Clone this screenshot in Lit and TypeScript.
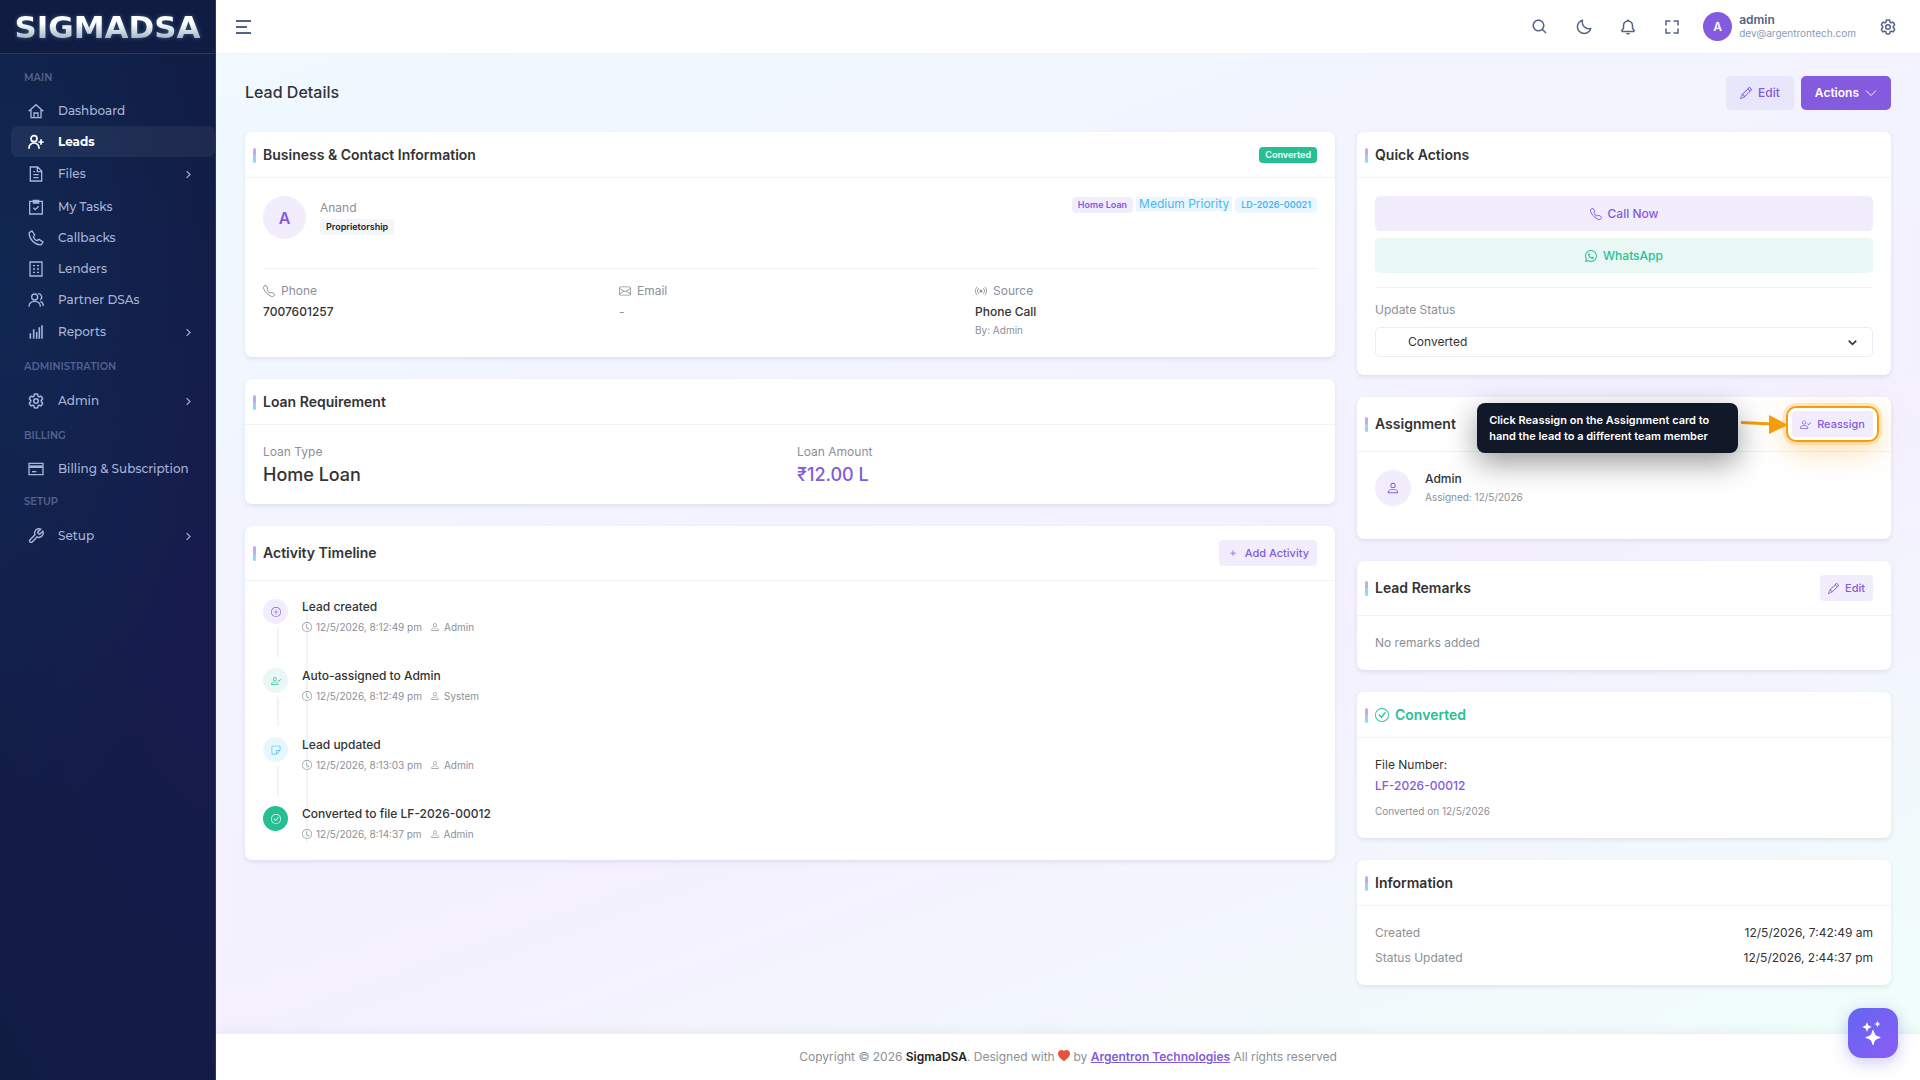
import { LitElement, html, css, svg, nothing, type TemplateResult, type SVGTemplateResult } from "lit";
import { customElement, property } from "lit/decorators.js";
import { classMap } from "lit/directives/class-map.js";

const GEAR =
  "M9.594 3.94c.09-.542.56-.94 1.11-.94h2.593c.55 0 1.02.398 1.11.94l.213 1.281c.063.374.313.686.645.87.074.04.147.083.22.127.325.196.72.257 1.075.124l1.217-.456a1.125 1.125 0 0 1 1.37.49l1.296 2.247a1.125 1.125 0 0 1-.26 1.431l-1.003.827c-.293.241-.438.613-.43.992a7.723 7.723 0 0 1 0 .255c-.008.378.137.75.43.991l1.004.827c.424.35.534.955.26 1.43l-1.298 2.247a1.125 1.125 0 0 1-1.369.491l-1.217-.456c-.355-.133-.75-.072-1.076.124a6.47 6.47 0 0 1-.22.128c-.331.183-.581.495-.644.869l-.213 1.281c-.09.543-.56.94-1.11.94h-2.594c-.55 0-1.019-.398-1.11-.94l-.213-1.281c-.062-.374-.312-.686-.644-.87a6.52 6.52 0 0 1-.22-.127c-.325-.196-.72-.257-1.076-.124l-1.217.456a1.125 1.125 0 0 1-1.369-.49l-1.297-2.247a1.125 1.125 0 0 1 .26-1.431l1.004-.827c.292-.24.437-.613.43-.991a6.932 6.932 0 0 1 0-.255c.007-.38-.138-.751-.43-.992l-1.004-.827a1.125 1.125 0 0 1-.26-1.43l1.297-2.247a1.125 1.125 0 0 1 1.37-.491l1.216.456c.356.133.751.072 1.076-.124.072-.044.146-.086.22-.128.332-.183.582-.495.644-.869z";
const RING = "M8 15A7 7 0 1 1 8 1a7 7 0 0 1 0 14m0 1A8 8 0 1 0 8 0a8 8 0 0 0 0 16";
const PLUS = "M8 4a.5.5 0 0 1 .5.5v3h3a.5.5 0 0 1 0 1h-3v3a.5.5 0 0 1-1 0v-3h-3a.5.5 0 0 1 0-1h3v-3A.5.5 0 0 1 8 4";

/* Outline icons on a 24 grid, drawn with strokes. */
const LINE: Record<string, SVGTemplateResult> = {
  home: svg`<path d="M1 12.5 12 2.5l11 10M4.5 10v12h15V10M9 22v-7h6v7"/>`,
  userPlus: svg`<g stroke-width="2.6"><circle cx="9" cy="7" r="4.5"/><path d="M1.500 22v-1a7.500 7.500 0 0 1 15 0v1M19.500 8v8M15.500 12h8"/></g>`,
  file: svg`<path d="M3.500 1.500h11l6 6v15h-17zM14 2v6.500h6M8 13h8M8 17.500h8M8 8.500h2.500"/>`,
  task: svg`<path d="M2.500 3.500h19v19h-19z"/><path d="M8 2h8v4H8z" fill="currentColor"/><path d="m8 13 3 3 5-5"/>`,
  phone: svg`<path d="M2 4 6 1.500l4 6L8 10.500c1 2.500 3 4.500 5.500 5.500l3-2 6 4-2.500 4C11 23.500.5 13 2 4z"/>`,
  building: svg`<path d="M3 1.500h18v21H3z"/><path d="M7.500 7h3M13.500 7h3M7.500 12h3M13.500 12h3M7.500 17h3M13.500 17h3"/>`,
  users: svg`<circle cx="10" cy="7.500" r="4.500"/><path d="M1.500 22c0-5 3.500-8 8.500-8s8.500 3 8.500 8M15 2.500a5 5 0 0 1 3.500 9M18.500 14c3 1 4.500 4 4.500 7"/>`,
  chart: svg`<g stroke-width="2.4"><path d="M3.500 14v8M8.500 8v14M13 12v10M17 5v17M21 2v20"/></g>`,
  gear: svg`<g transform="translate(-1.800 -1.800) scale(1.150)"><path d=${GEAR}/><circle cx="12" cy="12" r="3"/></g>`,
  card: svg`<path d="M1.500 3.500h21v17h-21z"/><path d="M2 8.500h20" stroke-width="4"/><path d="M6 16h6.500"/>`,
  wrench: svg`<g transform="translate(-1 -1) scale(1.080)"><path d="M14.700 6.300a1 1 0 0 0 0 1.400l1.600 1.600a1 1 0 0 0 1.400 0l3.800-3.800a6 6 0 0 1-7.900 7.900l-6.900 6.900a2.100 2.100 0 0 1-3-3l6.900-6.900a6 6 0 0 1 7.900-7.900z"/></g>`,
  right: svg`<path d="m7 3 9 9-9 9" stroke-width="3"/>`,
  down: svg`<path d="m2 7 10 10L22 7"/>`,
  caret: svg`<path d="m2 7 10 10L22 7" stroke-width="4"/>`,
};

/* Filled icons; the number is the size of the square grid. */
const FILL: Record<string, [number, string]> = {
  search: [24, "M10 18a7.952 7.952 0 0 0 4.897-1.688l4.396 4.396 1.414-1.414-4.396-4.396A7.952 7.952 0 0 0 18 10c0-4.411-3.589-8-8-8s-8 3.589-8 8 3.589 8 8 8zm0-14c3.309 0 6 2.691 6 6s-2.691 6-6 6-6-2.691-6-6 2.691-6 6-6z"],
  moon: [24, "M20.742 13.045a8.088 8.088 0 0 1-2.077.271c-2.135 0-4.14-.83-5.646-2.336a8.025 8.025 0 0 1-2.064-7.723A1 1 0 0 0 9.73 2.034a10.014 10.014 0 0 0-4.489 2.582c-3.898 3.898-3.898 10.243 0 14.143a9.937 9.937 0 0 0 7.072 2.93 9.93 9.93 0 0 0 7.07-2.929 10.007 10.007 0 0 0 2.583-4.491 1.001 1.001 0 0 0-1.224-1.224zm-2.772 4.301a7.947 7.947 0 0 1-5.656 2.343 7.953 7.953 0 0 1-5.658-2.344c-3.118-3.119-3.118-8.195 0-11.314a7.923 7.923 0 0 1 2.06-1.483 10.027 10.027 0 0 0 2.89 7.848 9.972 9.972 0 0 0 7.848 2.891 8.036 8.036 0 0 1-1.484 2.059z"],
  bell: [24, "M19 13.586V10c0-3.217-2.185-5.927-5.145-6.742C13.562 2.52 12.846 2 12 2s-1.562.52-1.855 1.258C7.185 4.074 5 6.783 5 10v3.586l-1.707 1.707A.996.996 0 0 0 3 16v2a1 1 0 0 0 1 1h16a1 1 0 0 0 1-1v-2a.996.996 0 0 0-.293-.707L19 13.586zM19 17H5v-.586l1.707-1.707A.996.996 0 0 0 7 14v-4c0-2.757 2.243-5 5-5s5 2.243 5 5v4c0 .266.105.52.293.707L19 16.414V17zm-7 5a2.98 2.98 0 0 0 2.818-2H9.182A2.98 2.98 0 0 0 12 22z"],
  fullscreen: [24, "M5 5h5V3H3v7h2zm5 14H5v-5H3v7h7zm11-5h-2v5h-5v2h7zm-2-4h2V3h-7v2h5z"],
  pencil: [16, "M12.146.146a.5.5 0 0 1 .708 0l3 3a.5.5 0 0 1 0 .708l-10 10a.5.5 0 0 1-.168.11l-5 2a.5.5 0 0 1-.65-.65l2-5a.5.5 0 0 1 .11-.168zM11.207 2.5 13.5 4.793 14.793 3.5 12.5 1.207zm1.586 3L10.5 3.207 4 9.707V10h.5a.5.5 0 0 1 .5.5v.5h.5a.5.5 0 0 1 .5.5v.5h.293zm-9.761 5.175-.106.106-1.528 3.821 3.821-1.528.106-.106A.5.5 0 0 1 5 12.5V12h-.5a.5.5 0 0 1-.5-.5V11h-.5a.5.5 0 0 1-.468-.325"],
  telephone: [16, "M3.654 1.328a.678.678 0 0 0-1.015-.063L1.605 2.3c-.483.484-.661 1.169-.45 1.77a17.6 17.6 0 0 0 4.168 6.608 17.6 17.6 0 0 0 6.608 4.168c.601.211 1.286.033 1.77-.45l1.034-1.034a.678.678 0 0 0-.063-1.015l-2.307-1.794a.68.68 0 0 0-.58-.122l-2.19.547a1.75 1.75 0 0 1-1.657-.459L5.482 8.062a1.75 1.75 0 0 1-.46-1.657l.548-2.19a.68.68 0 0 0-.122-.58zM1.884.511a1.745 1.745 0 0 1 2.612.163L6.29 2.98c.329.423.445.974.315 1.494l-.547 2.19a.68.68 0 0 0 .178.643l2.457 2.457a.68.68 0 0 0 .644.178l2.189-.547a1.75 1.75 0 0 1 1.494.315l2.306 1.794c.829.645.905 1.87.163 2.611l-1.034 1.034c-.74.74-1.846 1.065-2.877.702a18.6 18.6 0 0 1-7.01-4.42 18.6 18.6 0 0 1-4.42-7.009c-.362-1.03-.037-2.137.703-2.877z"],
  envelope: [16, "M0 4a2 2 0 0 1 2-2h12a2 2 0 0 1 2 2v8a2 2 0 0 1-2 2H2a2 2 0 0 1-2-2zm2-1a1 1 0 0 0-1 1v.217l7 4.2 7-4.2V4a1 1 0 0 0-1-1zm13 2.383-4.708 2.825L15 11.105zm-.034 6.876-5.64-3.471L8 9.583l-1.326-.795-5.64 3.47A1 1 0 0 0 2 13h12a1 1 0 0 0 .966-.741M1 11.105l4.708-2.897L1 5.383z"],
  broadcast: [16, "M3.05 3.05a7 7 0 0 0 0 9.9.5.5 0 0 1-.707.707 8 8 0 0 1 0-11.314.5.5 0 0 1 .707.707m2.122 2.122a4 4 0 0 0 0 5.656.5.5 0 1 1-.708.708 5 5 0 0 1 0-7.072.5.5 0 0 1 .708.708m5.656-.708a.5.5 0 0 1 .708 0 5 5 0 0 1 0 7.072.5.5 0 1 1-.708-.708 4 4 0 0 0 0-5.656.5.5 0 0 1 0-.708m2.122-2.12a.5.5 0 0 1 .707 0 8 8 0 0 1 0 11.313.5.5 0 0 1-.707-.707 7 7 0 0 0 0-9.9.5.5 0 0 1 0-.707zM10 8a2 2 0 1 1-4 0 2 2 0 0 1 4 0"],
  whatsapp: [16, "M13.601 2.326A7.85 7.85 0 0 0 7.994 0C3.627 0 .068 3.558.064 7.926c0 1.399.366 2.76 1.057 3.965L0 16l4.204-1.102a7.9 7.9 0 0 0 3.79.965h.004c4.368 0 7.926-3.558 7.93-7.93A7.9 7.9 0 0 0 13.6 2.326zM7.994 14.521a6.6 6.6 0 0 1-3.356-.92l-.24-.144-2.494.654.666-2.433-.156-.251a6.56 6.56 0 0 1-1.007-3.505c0-3.626 2.957-6.584 6.591-6.584a6.56 6.56 0 0 1 4.66 1.931 6.56 6.56 0 0 1 1.928 4.66c-.004 3.639-2.961 6.592-6.592 6.592m3.615-4.934c-.197-.099-1.17-.578-1.353-.646-.182-.065-.315-.099-.445.099-.133.197-.513.646-.627.775-.114.133-.232.148-.43.05-.197-.1-.836-.308-1.592-.985-.59-.525-.985-1.175-1.103-1.372-.114-.198-.011-.304.088-.403.087-.088.197-.232.296-.346.1-.114.133-.198.198-.33.065-.134.034-.248-.015-.347-.05-.099-.445-1.076-.612-1.47-.16-.389-.323-.335-.445-.34-.114-.007-.247-.007-.38-.007a.73.73 0 0 0-.529.247c-.182.198-.691.677-.691 1.654s.71 1.916.81 2.049c.098.133 1.394 2.132 3.383 2.992.47.205.84.326 1.129.418.475.152.904.129 1.246.08.38-.058 1.171-.48 1.338-.943.164-.464.164-.86.114-.943-.049-.084-.182-.133-.38-.232"],
  person: [16, "M8 8a3 3 0 1 0 0-6 3 3 0 0 0 0 6m2-3a2 2 0 1 1-4 0 2 2 0 0 1 4 0m4 8c0 1-1 1-1 1H3s-1 0-1-1 1-4 6-4 6 3 6 4m-1-.004c-.001-.246-.154-.986-.832-1.664C11.516 10.68 10.289 10 8 10s-3.516.68-4.168 1.332c-.678.678-.83 1.418-.832 1.664z"],
  personCheck: [16, "M6 8a3 3 0 1 0 0-6 3 3 0 0 0 0 6m2-3a2 2 0 1 1-4 0 2 2 0 0 1 4 0m4 8c0 1-1 1-1 1H1s-1 0-1-1 1-4 6-4 6 3 6 4m-1-.004c-.001-.246-.154-.986-.832-1.664C9.516 10.68 8.289 10 6 10c-2.29 0-3.516.68-4.168 1.332-.678.678-.83 1.418-.832 1.664zM15.854 5.146a.5.5 0 0 1 0 .708l-3 3a.5.5 0 0 1-.708 0l-1.500-1.500a.5.5 0 0 1 .708-.708L12.500 7.793l2.646-2.647a.5.5 0 0 1 .708 0"],
  clock: [16, "M8 3.500a.5.5 0 0 0-1 0V9a.5.5 0 0 0 .252.434l3.500 2a.5.5 0 0 0 .496-.868L8 8.710zM8 16A8 8 0 1 0 8 0a8 8 0 0 0 0 16m7-8A7 7 0 1 1 1 8a7 7 0 0 1 14 0"],
  plus: [16, PLUS],
  plusCircle: [16, RING + PLUS],
  checkCircle: [16, RING + "M10.970 4.970l-.02.022-3.473 4.425-2.093-2.094a.75.75 0 0 0-1.060 1.060L6.970 11.030a.75.75 0 0 0 1.079-.02l3.992-4.990a.75.75 0 0 0-1.071-1.050"],
  sticky: [16, "M2.500 1A1.500 1.500 0 0 0 1 2.500v11A1.500 1.500 0 0 0 2.500 15h6.086a1.500 1.500 0 0 0 1.060-.44l4.915-4.914A1.500 1.500 0 0 0 15 8.586V2.500A1.500 1.500 0 0 0 13.500 1zM2 2.500a.5.5 0 0 1 .5-.5h11a.5.5 0 0 1 .5.5V8H9.500A1.500 1.500 0 0 0 8 9.500V14H2.500a.5.5 0 0 1-.5-.5zm7 11.293V9.500a.5.5 0 0 1 .5-.5h4.293z"],
  heart: [16, "M8 1.314C12.438-3.248 23.534 4.735 8 15-7.534 4.736 3.562-3.248 8 1.314"],
  stars: [16, "M7.657 6.247c.11-.33.576-.33.686 0l.645 1.937a2.890 2.890 0 0 0 1.829 1.828l1.936.645c.33.11.33.576 0 .686l-1.937.645a2.890 2.890 0 0 0-1.828 1.829l-.645 1.936a.361.361 0 0 1-.686 0l-.645-1.937a2.890 2.890 0 0 0-1.828-1.828l-1.937-.645a.361.361 0 0 1 0-.686l1.937-.645a2.890 2.890 0 0 0 1.828-1.828zM3.794 1.148a.217.217 0 0 1 .412 0l.387 1.162c.173.518.579.924 1.097 1.097l1.162.387a.217.217 0 0 1 0 .412l-1.162.387A1.730 1.730 0 0 0 4.593 5.690l-.387 1.162a.217.217 0 0 1-.412 0L3.407 5.690A1.730 1.730 0 0 0 2.310 4.593l-1.162-.387a.217.217 0 0 1 0-.412l1.162-.387A1.730 1.730 0 0 0 3.407 2.310zM10.863.099a.145.145 0 0 1 .274 0l.258.774c.115.346.386.617.732.732l.774.258a.145.145 0 0 1 0 .274l-.774.258a1.160 1.160 0 0 0-.732.732l-.258.774a.145.145 0 0 1-.274 0l-.258-.774a1.160 1.160 0 0 0-.732-.732L9.100 2.137a.145.145 0 0 1 0-.274l.774-.258c.346-.115.617-.386.732-.732z"],
};

function icon(name: string, size = 12): TemplateResult {
  const line = LINE[name];
  if (line) {
    return html`<svg class="icon" width=${size} height=${size} viewBox="0 0 24 24" fill="none" stroke="currentColor" stroke-width="2" aria-hidden="true">${line}</svg>`;
  }
  const [grid, d] = FILL[name];
  return html`<svg class="icon" width=${size} height=${size} viewBox="0 0 ${grid} ${grid}" fill="currentColor" aria-hidden="true"><path d=${d}></path></svg>`;
}

interface NavItem {
  icon: string;
  label: string;
  active?: boolean;
  children?: boolean;
}

const NAV: { title: string; items: NavItem[] }[] = [
  {
    title: "MAIN",
    items: [
      { icon: "home", label: "Dashboard" },
      { icon: "userPlus", label: "Leads", active: true },
      { icon: "file", label: "Files", children: true },
      { icon: "task", label: "My Tasks" },
      { icon: "phone", label: "Callbacks" },
      { icon: "building", label: "Lenders" },
      { icon: "users", label: "Partner DSAs" },
      { icon: "chart", label: "Reports", children: true },
    ],
  },
  { title: "ADMINISTRATION", items: [{ icon: "gear", label: "Admin", children: true }] },
  { title: "BILLING", items: [{ icon: "card", label: "Billing & Subscription" }] },
  { title: "SETUP", items: [{ icon: "wrench", label: "Setup", children: true }] },
];

const TIMELINE = [
  { icon: "plusCircle", tone: "violet", title: "Lead created", time: "12/5/2026, 8:12:49 pm", by: "Admin" },
  { icon: "personCheck", tone: "mint", title: "Auto-assigned to Admin", time: "12/5/2026, 8:12:49 pm", by: "System" },
  { icon: "sticky", tone: "sky", title: "Lead updated", time: "12/5/2026, 8:13:03 pm", by: "Admin" },
  { icon: "checkCircle", tone: "green", title: "Converted to file LF-2026-00012", time: "12/5/2026, 8:14:37 pm", by: "Admin" },
];

@customElement("side-nav")
export class SideNav extends LitElement {
  static styles = css`
    :host {
      display: flex;
      flex-direction: column;
      box-sizing: border-box;
      border-right: 1px solid #2b3560;
      color: #a9b4d9;
      font: 500 12px/20px Montserrat, Inter, sans-serif;
      background:
        radial-gradient(ellipse 240px 560px at 0 280px, rgba(16, 42, 84, 0.85), transparent),
        radial-gradient(ellipse 320px 600px at 100% 640px, rgba(26, 27, 80, 0.75), transparent),
        #111c43;
    }
    .brand {
      display: flex;
      align-items: center;
      justify-content: center;
      height: 53px;
      border-bottom: 1px solid #2b3560;
      background: #111c43;
      text-decoration: none;
    }
    .wordmark {
      font: 700 31px/36px "DejaVu Sans", sans-serif;
      color: transparent;
      background: linear-gradient(#ffffff 40%, #9fb0bf 85%);
      background-clip: text;
      -webkit-background-clip: text;
      filter: drop-shadow(0 0 2px rgba(90, 160, 200, 0.5));
    }
    nav {
      padding: 6px 0 24px;
    }
    .group {
      display: flex;
      align-items: center;
      height: 35px;
      margin: 0;
      padding: 0 24px;
      font-size: 10px;
      font-weight: 600;
      color: #55618f;
    }
    ul {
      list-style: none;
      margin: 0;
      padding: 0 0 0 11px;
    }
    .item {
      display: flex;
      align-items: center;
      gap: 14px;
      height: 31px;
      padding: 0 22px 0 17px;
      border-radius: 7px;
      color: inherit;
      text-decoration: none;
      white-space: nowrap;
    }
    .item.parent {
      height: 34px;
    }
    .item.active {
      background: rgba(255, 255, 255, 0.06);
      color: #fff;
      font-weight: 700;
    }
    .item .icon:last-child {
      margin-left: auto;
    }
    .icon {
      flex: none;
    }
  `;

  render() {
    return html`
      <a class="brand" href="#home"><span class="wordmark">SIGMADSA</span></a>
      <nav aria-label="Primary">
        ${NAV.map(
          (group) => html`
            <h2 class="group">${group.title}</h2>
            <ul>
              ${group.items.map(
                (item) => html`<li>
                  <a class=${classMap({ item: true, active: !!item.active, parent: !!item.children })} href="#${item.icon}">
                    ${icon(item.icon, 16)}<span>${item.label}</span>${item.children ? icon("right", 9) : nothing}
                  </a>
                </li>`,
              )}
            </ul>
          `,
        )}
      </nav>
    `;
  }
}

@customElement("panel-card")
export class PanelCard extends LitElement {
  @property() heading = "";

  static styles = css`
    :host {
      display: block;
      border-radius: 7px;
      background: #fff;
      box-shadow: 0 2px 4px rgba(60, 50, 100, 0.1);
    }
    header {
      display: flex;
      align-items: center;
      justify-content: space-between;
      box-sizing: border-box;
      min-height: 46px;
      padding: 14px 18px;
      border-bottom: 1px solid #f3f3f3;
    }
    h2 {
      display: flex;
      align-items: flex-end;
      gap: 7px;
      margin: 0 0 0 -10px;
      font-size: 14px;
      line-height: 16px;
      font-weight: 600;
    }
    h2::before {
      content: "";
      width: 3px;
      height: 15px;
      border-radius: 2px;
      background: linear-gradient(#c4a9ec 50%, #8fd9f2 50%);
    }
    .body {
      padding: 18px;
    }
  `;

  render() {
    return html`
      <header>
        <h2><slot name="title">${this.heading}</slot></h2>
        <slot name="action"></slot>
      </header>
      <div class="body"><slot></slot></div>
    `;
  }
}

@customElement("app-root")
export class AppRoot extends LitElement {
  static styles = css`
    :host {
      display: grid;
      grid-template-columns: 216px minmax(0, 1fr);
      min-height: 100vh;
      color: #333335;
      font: 400 12px/18px Inter, sans-serif;
    }
    * {
      box-sizing: border-box;
    }
    p,
    h1,
    dl,
    dd,
    ul {
      margin: 0;
      padding: 0;
    }
    a {
      color: inherit;
      text-decoration: none;
    }
    button {
      font: inherit;
      color: inherit;
      border: 0;
      padding: 0;
      background: none;
      cursor: pointer;
    }
    .icon {
      flex: none;
    }
    .page {
      display: flex;
      flex-direction: column;
      background: linear-gradient(160deg, #f0faff, #f4f0ff 60%, #f0fffa);
    }

    .topbar {
      display: flex;
      align-items: center;
      justify-content: space-between;
      height: 54px;
      padding: 0 24px 0 20px;
      border-bottom: 1px solid #eef1f6;
      background: #fff;
      color: #536485;
    }
    .burger {
      display: grid;
      gap: 4px;
      width: 15px;
    }
    .burger i {
      height: 2px;
      background: #536485;
    }
    .burger i:nth-child(2) {
      width: 11px;
    }
    .tools {
      display: flex;
      align-items: center;
    }
    .tool {
      display: flex;
      margin-right: 26px;
    }
    .tool:last-child {
      margin-right: 0;
    }
    .user {
      display: flex;
      align-items: center;
      gap: 7px;
      margin: 0 24px 0 -4px;
      text-align: left;
    }
    .user .face {
      display: grid;
      place-items: center;
      width: 29px;
      height: 29px;
      border-radius: 50%;
      background: #845adf;
      color: #fff;
      font-weight: 600;
    }
    .user b {
      display: block;
      font-weight: 600;
      line-height: 13px;
    }
    .user small {
      display: block;
      font-size: 10px;
      line-height: 15px;
      color: #8c9ab5;
    }

    main {
      flex: 1;
      padding: 22px 29px 48px;
    }
    .heading {
      display: flex;
      align-items: center;
      justify-content: space-between;
      margin-bottom: 22px;
    }
    h1 {
      padding-bottom: 2px;
      font-size: 16px;
      line-height: 24px;
      font-weight: 500;
    }
    .row {
      display: flex;
      gap: 7px;
    }
    .btn {
      display: inline-flex;
      align-items: center;
      justify-content: center;
      gap: 6px;
      height: 34px;
      padding: 0 14px;
      border-radius: 5px;
      background: #f2edfc;
      color: #845adf;
      font-weight: 500;
    }
    .btn.soft {
      background: #e7e6fb;
    }
    .btn.solid {
      background: #845adf;
      color: #fff;
      font-weight: 600;
    }
    .btn.wide {
      width: 100%;
      height: 35px;
    }
    .btn.wa {
      background: #e9f8f4;
      color: #26bf94;
    }
    .btn.small {
      height: 26px;
      padding: 0 8px;
      border-radius: 4px;
      font-size: 11px;
    }

    .columns {
      display: grid;
      grid-template-columns: repeat(3, minmax(0, 1fr));
      gap: 22px;
      align-items: start;
    }
    .stack {
      display: grid;
      gap: 22px;
    }
    .stack.main {
      grid-column: span 2;
    }

    .badge {
      display: inline-block;
      height: 16px;
      padding: 0 6px;
      border-radius: 4px;
      font-size: 9px;
      line-height: 16px;
      font-weight: 600;
    }
    .badge.green {
      background: #26bf94;
      color: #fff;
    }
    .badge.plain {
      background: #f3f6f8;
      color: #232323;
    }
    .badge.violet {
      background: #f2edfc;
      color: #845adf;
    }
    .badge.sky {
      background: #ebf7fe;
      color: #49b6f5;
    }
    .priority {
      height: 14px;
      padding: 0 3px;
      background: #ebf7fe;
      color: #49b6f5;
      line-height: 14px;
    }
    .muted {
      color: #8c9097;
    }
    .small-text {
      font-size: 10px;
    }
    .link {
      color: #845adf;
      font-weight: 500;
    }
    .strong {
      font-weight: 500;
    }

    .profile {
      display: flex;
      align-items: flex-start;
      gap: 14px;
      min-height: 73px;
      border-bottom: 1px solid #f3f3f3;
    }
    .initial {
      display: grid;
      place-items: center;
      width: 43px;
      height: 43px;
      border-radius: 50%;
      background: #f2edfc;
      color: #845adf;
      font-size: 16px;
      font-weight: 600;
    }
    .who {
      display: grid;
      justify-items: start;
      gap: 2px;
      padding-top: 3px;
    }
    .tags {
      display: flex;
      gap: 3px;
      margin-left: auto;
      padding-top: 1px;
    }
    .facts {
      display: grid;
      grid-template-columns: repeat(3, minmax(0, 1fr));
      gap: 14px;
      padding-top: 13px;
    }
    .facts.two {
      grid-template-columns: repeat(2, minmax(0, 1fr));
      padding: 0;
    }
    .facts dt {
      display: flex;
      align-items: center;
      gap: 6px;
      margin-bottom: 3px;
      color: #8c9097;
    }
    .facts .big {
      font-size: 18px;
      line-height: 22px;
      font-weight: 500;
    }

    .timeline {
      position: relative;
      list-style: none;
    }
    .timeline::before {
      content: "";
      position: absolute;
      top: 0;
      bottom: 0;
      left: 43px;
      width: 2px;
      background: #f3f3f3;
    }
    .event {
      position: relative;
      display: grid;
      grid-template-columns: 25px 1fr;
      gap: 14px;
      min-height: 69px;
    }
    .event:last-child {
      min-height: 36px;
      height: 36px;
    }
    .rail {
      display: flex;
      flex-direction: column;
      gap: 4px;
    }
    .rail::after {
      content: "";
      flex: 1;
      width: 2px;
      margin: 0 0 11px 14px;
      background: #f3f3f3;
    }
    .event:last-child .rail::after {
      content: none;
    }
    .dot {
      display: grid;
      place-items: center;
      width: 25px;
      height: 25px;
      border-radius: 50%;
    }
    .dot.violet {
      background: #f2edfc;
      color: #845adf;
    }
    .dot.mint {
      background: #e9f8f4;
      color: #26bf94;
    }
    .dot.sky {
      background: #e6f8fe;
      color: #49b6f5;
    }
    .dot.green {
      background: #26bf94;
      color: #fff;
    }
    .event .strong {
      line-height: 16px;
    }
    .meta {
      display: flex;
      align-items: center;
      gap: 4px;
      margin-top: 3px;
      font-size: 10px;
      color: #8c9097;
    }
    .meta .icon:nth-of-type(2) {
      margin-left: 4px;
    }

    .actions {
      display: grid;
      gap: 7px;
      padding-bottom: 14px;
      margin-bottom: 13px;
      border-bottom: 1px solid #f3f3f3;
    }
    .status label {
      display: block;
      margin-bottom: 8px;
      color: #8c9097;
    }
    .select {
      display: grid;
      align-items: center;
    }
    .select > * {
      grid-area: 1 / 1;
    }
    .select .icon {
      justify-self: end;
      margin-right: 16px;
      pointer-events: none;
    }
    select {
      appearance: none;
      width: 100%;
      height: 30px;
      padding: 0 32px;
      border: 1px solid #e9edf6;
      border-radius: 5px;
      background: #fff;
      font: inherit;
      color: inherit;
    }

    .assignee {
      display: flex;
      gap: 14px;
      min-height: 51px;
    }
    .assignee .initial {
      width: 36px;
      height: 36px;
    }
    .target {
      position: relative;
      display: flex;
    }
    .halo {
      position: absolute;
      inset: -5px -6px;
      border: 2px solid #f59e0b;
      border-radius: 10px;
      box-shadow:
        0 0 0 3px rgba(245, 158, 11, 0.2),
        0 8px 28px rgba(245, 158, 11, 0.35);
      pointer-events: none;
    }
    .arrow {
      position: absolute;
      right: 100%;
      top: 2px;
      width: 54px;
      height: 22px;
    }
    .tip {
      position: absolute;
      right: calc(100% + 54px);
      top: -8px;
      width: 261px;
      padding: 9px 12px;
      border-radius: 8px;
      background: #111827;
      box-shadow: 0 10px 30px rgba(0, 0, 0, 0.4);
      color: #fff;
      font-size: 11px;
      font-weight: 600;
      line-height: 16px;
    }
    .title-ok {
      display: flex;
      align-items: center;
      gap: 6px;
      color: #26bf94;
    }
    .file {
      display: grid;
      gap: 3px;
    }
    .file .small-text {
      margin-top: 4px;
    }
    .info {
      display: grid;
      gap: 7px;
    }
    .info div {
      display: flex;
      justify-content: space-between;
    }

    footer {
      display: flex;
      align-items: center;
      justify-content: center;
      height: 47px;
      border-top: 1px solid #eef1f4;
      background: #fff;
      box-shadow: 0 -2px 10px rgba(60, 60, 100, 0.06);
      color: #8c9097;
    }
    footer .brandname {
      color: #232323;
      font-weight: 600;
    }
    footer .icon {
      color: #e6533c;
      vertical-align: -1px;
    }
    footer a {
      color: #845adf;
      font-weight: 600;
      text-decoration: underline;
    }
    .assistant {
      position: fixed;
      right: 22px;
      bottom: 22px;
      display: grid;
      place-items: center;
      width: 50px;
      height: 50px;
      border-radius: 14px;
      background: linear-gradient(135deg, #6366f1, #8b5cf6);
      box-shadow: 0 4px 16px rgba(99, 102, 241, 0.35);
      color: #fff;
    }
  `;

  private topbar() {
    return html`
      <header class="topbar">
        <button class="burger" aria-label="Toggle menu"><i></i><i></i><i></i></button>
        <div class="tools">
          ${["search", "moon", "bell", "fullscreen"].map(
            (name) => html`<button class="tool" aria-label=${name}>${icon(name, 18)}</button>`,
          )}
          <button class="user">
            <span class="face">A</span>
            <span><b>admin</b><small>dev@argentrontech.com</small></span>
          </button>
          <button class="tool" aria-label="Settings">${icon("gear", 16)}</button>
        </div>
      </header>
    `;
  }

  private contact() {
    return html`
      <panel-card heading="Business & Contact Information">
        <span slot="action" class="badge green">Converted</span>
        <div class="profile">
          <span class="initial">A</span>
          <div class="who">
            <span class="muted">Anand</span>
            <span class="badge plain">Proprietorship</span>
          </div>
          <div class="tags">
            <span class="badge violet">Home Loan</span>
            <span class="priority">Medium Priority</span>
            <span class="badge sky">LD-2026-00021</span>
          </div>
        </div>
        <dl class="facts">
          <div>
            <dt>${icon("telephone")}Phone</dt>
            <dd class="strong">7007601257</dd>
          </div>
          <div>
            <dt>${icon("envelope")}Email</dt>
            <dd class="muted">-</dd>
          </div>
          <div>
            <dt>${icon("broadcast")}Source</dt>
            <dd class="strong">Phone Call</dd>
            <dd class="muted small-text">By: Admin</dd>
          </div>
        </dl>
      </panel-card>
    `;
  }

  private loan() {
    return html`
      <panel-card heading="Loan Requirement">
        <dl class="facts two">
          <div>
            <dt>Loan Type</dt>
            <dd class="big">Home Loan</dd>
          </div>
          <div>
            <dt>Loan Amount</dt>
            <dd class="big link">₹12.00 L</dd>
          </div>
        </dl>
      </panel-card>
    `;
  }

  private timeline() {
    return html`
      <panel-card heading="Activity Timeline">
        <button slot="action" class="btn small">${icon("plus", 12)}Add Activity</button>
        <ul class="timeline">
          ${TIMELINE.map(
            (event) => html`<li class="event">
              <div class="rail"><span class="dot ${event.tone}">${icon(event.icon, 10)}</span></div>
              <div>
                <p class="strong">${event.title}</p>
                <p class="meta">${icon("clock", 10)}<span>${event.time}</span>${icon("person", 10)}<span>${event.by}</span></p>
              </div>
            </li>`,
          )}
        </ul>
      </panel-card>
    `;
  }

  private quickActions() {
    return html`
      <panel-card heading="Quick Actions">
        <div class="actions">
          <button class="btn wide">${icon("telephone")}Call Now</button>
          <button class="btn wide wa">${icon("whatsapp")}WhatsApp</button>
        </div>
        <div class="status">
          <label for="status">Update Status</label>
          <div class="select">
            <select id="status">
              <option selected>Converted</option>
            </select>
            ${icon("caret", 9)}
          </div>
        </div>
      </panel-card>
    `;
  }

  private assignment() {
    return html`
      <panel-card heading="Assignment">
        <div slot="action" class="target">
          <button class="btn small">${icon("personCheck", 11)}Reassign</button>
          <span class="halo"></span>
          <svg class="arrow" viewBox="0 0 54 22" aria-hidden="true">
            <path d="M3 9.500 34 11" stroke="#f59e0b" stroke-width="3" />
            <path d="M31 2 50 12 31 21z" fill="#f59e0b" />
          </svg>
          <div class="tip" role="tooltip">Click Reassign on the Assignment card to hand the lead to a different team member</div>
        </div>
        <div class="assignee">
          <span class="initial">${icon("person", 14)}</span>
          <div>
            <p class="strong">Admin</p>
            <p class="muted small-text">Assigned: 12/5/2026</p>
          </div>
        </div>
      </panel-card>
    `;
  }

  private remarks() {
    return html`
      <panel-card heading="Lead Remarks">
        <button slot="action" class="btn small">${icon("pencil", 11)}Edit</button>
        <p class="muted">No remarks added</p>
      </panel-card>
    `;
  }

  private converted() {
    return html`
      <panel-card>
        <span slot="title" class="title-ok">${icon("checkCircle", 14)}Converted</span>
        <div class="file">
          <p>File Number:</p>
          <p><a class="link" href="#file">LF-2026-00012</a></p>
          <p class="muted small-text">Converted on 12/5/2026</p>
        </div>
      </panel-card>
    `;
  }

  private information() {
    return html`
      <panel-card heading="Information">
        <dl class="info">
          <div>
            <dt class="muted">Created</dt>
            <dd>12/5/2026, 7:42:49 am</dd>
          </div>
          <div>
            <dt class="muted">Status Updated</dt>
            <dd>12/5/2026, 2:44:37 pm</dd>
          </div>
        </dl>
      </panel-card>
    `;
  }

  render() {
    return html`
      <side-nav></side-nav>
      <div class="page">
        ${this.topbar()}
        <main>
          <div class="heading">
            <h1>Lead Details</h1>
            <div class="row">
              <button class="btn soft">${icon("pencil")}Edit</button>
              <button class="btn solid">Actions${icon("down")}</button>
            </div>
          </div>
          <div class="columns">
            <div class="stack main">${this.contact()}${this.loan()}${this.timeline()}</div>
            <div class="stack">
              ${this.quickActions()}${this.assignment()}${this.remarks()}${this.converted()}${this.information()}
            </div>
          </div>
        </main>
        <footer>
          <p>
            Copyright © 2026 <span class="brandname">SigmaDSA</span>. Designed with ${icon("heart", 12)} by
            <a href="#argentron">Argentron Technologies</a> All rights reserved
          </p>
        </footer>
      </div>
      <button class="assistant" aria-label="Open assistant">${icon("stars", 24)}</button>
    `;
  }
}
